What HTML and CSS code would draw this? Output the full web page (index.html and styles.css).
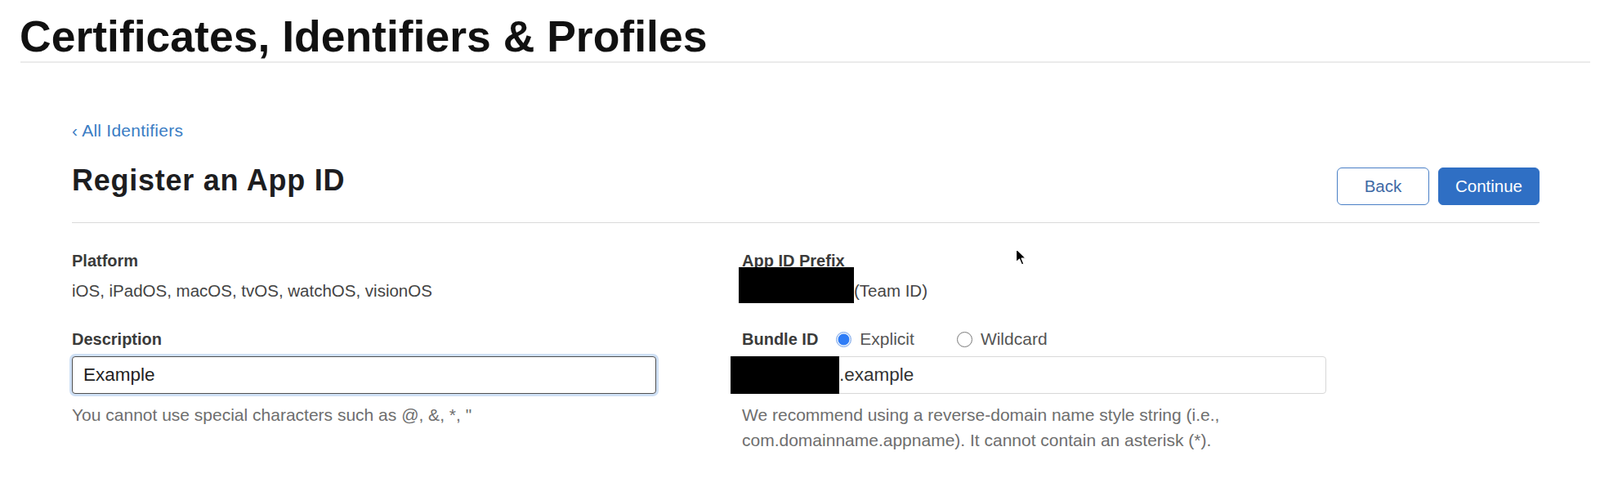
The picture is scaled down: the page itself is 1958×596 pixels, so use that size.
FILE: index.html
```html
<!DOCTYPE html>
<html lang="en">
<head>
<meta charset="utf-8">
<title>Register an App ID</title>
<link rel="stylesheet" href="styles.css">
</head>
<body>
<header class="site-header">
  <h1 class="site-title">Certificates, Identifiers &amp; Profiles</h1>
</header>
<main class="content">
  <a class="back-link" href="#">‹ All Identifiers</a>
  <div class="page-head">
    <h2 class="page-title">Register an App ID</h2>
    <div class="actions">
      <button class="btn btn-secondary" type="button">Back</button>
      <button class="btn btn-primary" type="button">Continue</button>
    </div>
  </div>
  <div class="form-grid">
    <div class="field">
      <div class="label">Platform</div>
      <div class="value">iOS, iPadOS, macOS, tvOS, watchOS, visionOS</div>
    </div>
    <div class="field">
      <div class="label">App ID Prefix</div>
      <div class="value"><span class="redact redact-prefix"></span>(Team ID)</div>
    </div>
    <div class="field">
      <label class="label" for="desc">Description</label>
      <input id="desc" class="text-input text-input-focused" type="text" value="Example">
      <p class="hint">You cannot use special characters such as @, &amp;, *, "</p>
    </div>
    <div class="field">
      <div class="bundle-row">
        <span class="label">Bundle ID</span>
        <span class="radio-option radio-option-first"><span class="radio radio-checked"></span>Explicit</span>
        <span class="radio-option radio-option-second"><span class="radio radio-unchecked"></span>Wildcard</span>
      </div>
      <div class="text-input bundle-input"><span class="redact redact-bundle"></span>.example</div>
      <p class="hint">We recommend using a reverse-domain name style string (i.e., com.domainname.appname). It cannot contain an asterisk (*).</p>
    </div>
  </div>
</main>
<svg class="cursor" width="16" height="24" viewBox="0 0 16 24" aria-hidden="true">
  <path d="M1.5 1.5 L1.5 18 L5.5 14.2 L8.4 21 L11 19.9 L8.2 13.2 L13.6 13.2 Z" fill="#000" stroke="#fff" stroke-width="1.3" stroke-linejoin="round"/>
</svg>
</body>
</html>
```

FILE: styles.css
```css
html, body {
  margin: 0;
  background: #ffffff;
}

body {
  font-family: "Liberation Sans", Arial, sans-serif;
  color: #333333;
  position: relative;
  min-height: 596px;
}

.site-header {
  margin: 0 12px 0 25px;
  padding-top: 18px;
  padding-bottom: 4px;
  border-bottom: 2px solid #ebebeb;
}

.site-title {
  margin: 0 0 0 -1px;
  font-size: 53.5px;
  line-height: 53px;
  font-weight: 700;
  color: #111111;
}

.content {
  padding: 0 74px 0 88px;
}

.back-link {
  display: block;
  width: max-content;
  margin-top: 71px;
  font-size: 21px;
  line-height: 24px;
  color: #3b7dc4;
  text-decoration: none;
  letter-spacing: 0.25px;
}

.page-head {
  display: flex;
  justify-content: space-between;
  align-items: flex-start;
  margin-top: 29px;
  padding-bottom: 21px;
  border-bottom: 1px solid #dadada;
}

.page-title {
  margin: 0;
  font-size: 36px;
  line-height: 40px;
  font-weight: 700;
  color: #1d1d1f;
  letter-spacing: 0.75px;
}

.actions {
  display: flex;
  gap: 11px;
  margin-top: 4px;
}

.btn {
  box-sizing: border-box;
  height: 46px;
  min-width: 113px;
  padding: 0 20px;
  border-radius: 6px;
  font-family: "Liberation Sans", Arial, sans-serif;
  font-size: 20.5px;
  cursor: pointer;
}

.btn-secondary {
  background: #ffffff;
  border: 1.5px solid #4a80c6;
  color: #3e6aa6;
}

.btn-primary {
  background: #2f6fc4;
  border: 1.5px solid #2f6fc4;
  color: #ffffff;
}

.form-grid {
  display: grid;
  grid-template-columns: 820px 1fr;
  row-gap: 32px;
  margin-top: 34px;
}

.label {
  display: block;
  font-size: 20px;
  line-height: 24px;
  font-weight: 700;
  color: #3a3a3a;
}

.value {
  margin-top: 12px;
  font-size: 20.5px;
  line-height: 26px;
  color: #444444;
}

.redact {
  background: #000000;
}

.redact-prefix {
  display: inline-block;
  width: 141px;
  height: 44px;
  margin-left: -4px;
  margin-top: -18px;
  vertical-align: -8px;
}

.bundle-row {
  display: flex;
  align-items: center;
  height: 24px;
}

.radio-option {
  display: flex;
  align-items: center;
  gap: 10px;
  font-size: 21px;
  line-height: 24px;
  color: #555555;
}

.radio-option-first {
  margin-left: 22px;
}

.radio-option-second {
  margin-left: 52px;
}

.radio {
  box-sizing: border-box;
  width: 19px;
  height: 19px;
  border-radius: 50%;
  flex: none;
}

.radio-checked {
  border: 1px solid #7fa9ea;
  background: radial-gradient(circle at center, #2e7cf6 0 6.5px, #dbe8fb 7.2px);
}

.radio-unchecked {
  border: 1.5px solid #7a7a7a;
  background: #ffffff;
}

.text-input {
  box-sizing: border-box;
  display: block;
  width: 715px;
  height: 46px;
  margin-top: 9px;
  padding: 0 13px;
  border-radius: 4px;
  font-family: "Liberation Sans", Arial, sans-serif;
  font-size: 22.5px;
  color: #222222;
}

.text-input-focused {
  border: 1.5px solid #505050;
  box-shadow: 0 0 0 3px #cfe0f5;
  outline: none;
}

.bundle-input {
  display: flex;
  align-items: center;
  padding: 0;
  border: 1px solid #d8d8d8;
  color: #333333;
}

.redact-bundle {
  align-self: stretch;
  width: 133px;
  margin: -1px 0 -1px -15px;
}

.hint {
  max-width: 715px;
  margin: 10px 0 0;
  font-size: 21px;
  line-height: 31px;
  color: #6e6e6e;
}

.cursor {
  position: absolute;
  left: 1242px;
  top: 303px;
}
```
